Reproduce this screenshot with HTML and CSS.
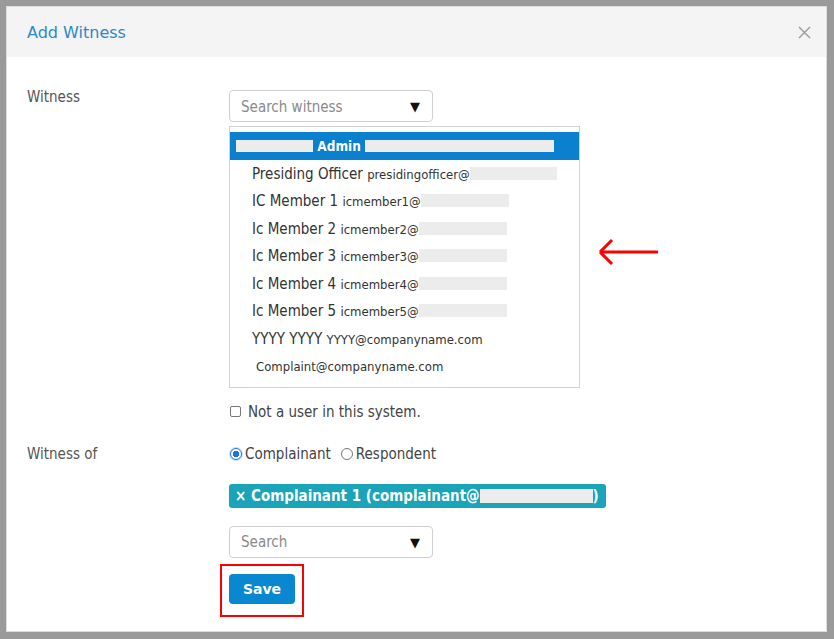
FILE: index.html
```html
<!DOCTYPE html>
<html>
<head>
<meta charset="utf-8">
<link rel="stylesheet" href="styles.css">
</head>
<body>
<div class="frame">
  <div class="dialog">
    <div class="header">
      <h4 class="title">Add Witness</h4>
      <span class="close"><svg width="13" height="13" viewBox="0 0 13 13"><path d="M1 1L12 12M12 1L1 12" stroke="#9a9a9a" stroke-width="1.4" fill="none"/></svg></span>
    </div>
    <div class="body">
      <div class="row">
        <div class="label">Witness</div>
        <div class="control">
          <div class="select"><span class="ph">Search witness</span><span class="caret">▼</span></div>
          <ul class="list">
            <li class="item active"><span class="redact r-a1"></span> <b>Admin</b> <span class="redact r-a2"></span></li>
            <li class="item"><span class="name">Presiding Officer</span> <span class="email">presidingofficer@</span><span class="redact r-p"></span></li>
            <li class="item"><span class="name">IC Member 1</span> <span class="email">icmember1@</span><span class="redact r-m"></span></li>
            <li class="item"><span class="name">Ic Member 2</span> <span class="email">icmember2@</span><span class="redact r-m"></span></li>
            <li class="item"><span class="name">Ic Member 3</span> <span class="email">icmember3@</span><span class="redact r-m"></span></li>
            <li class="item"><span class="name">Ic Member 4</span> <span class="email">icmember4@</span><span class="redact r-m"></span></li>
            <li class="item"><span class="name">Ic Member 5</span> <span class="email">icmember5@</span><span class="redact r-m"></span></li>
            <li class="item"><span class="name">YYYY YYYY</span> <span class="email">YYYY@companyname.com</span></li>
            <li class="item item-last"><span class="email">Complaint@companyname.com</span></li>
          </ul>
          <label class="check"><span class="box"></span>Not a user in this system.</label>
        </div>
      </div>
      <div class="row row2">
        <div class="label label2">Witness of</div>
        <div class="control">
          <div class="radios">
            <span class="radio checked"></span><span class="rlabel">Complainant</span>
            <span class="radio"></span><span class="rlabel">Respondent</span>
          </div>
          <div class="tag"><span class="x">×</span> Complainant 1 (complainant@<span class="redact r-t"></span>)</div>
          <div class="select select2"><span class="ph">Search</span><span class="caret">▼</span></div>
          <div class="save-wrap"><button class="save">Save</button></div>
        </div>
      </div>
    </div>
  </div>
  <svg class="arrow" width="64" height="32" viewBox="0 0 64 32"><path d="M3 16H61M3 16L15 4M3 16L15 28" stroke="#ff0000" stroke-width="3" fill="none"/></svg>
</div>
</body>
</html>
```
FILE: styles.css
```css
* { box-sizing: border-box; }
html, body { margin: 0; padding: 0; }
body {
  width: 834px;
  height: 639px;
  background: #9a9a9a;
  font-family: "DejaVu Sans Condensed", "DejaVu Sans", sans-serif;
  font-stretch: condensed;
  overflow: hidden;
}
.frame {
  position: relative;
  width: 834px;
  height: 639px;
  padding: 6px 7px 7px 6px;
}
.dialog {
  width: 100%;
  height: 626px;
  background: #fff;
  border: 1px solid #dcdcdc;
}
.header {
  height: 50px;
  background: #f4f4f4;
  display: flex;
  align-items: center;
  justify-content: space-between;
  padding: 0 15px 0 20px;
}
.title {
  margin: 0;
  font-family: "DejaVu Sans", sans-serif;
  font-stretch: normal;
  font-weight: normal;
  font-size: 16px;
  color: #2d88cc;
}
.close { display: flex; }
.body {
  padding: 33px 0 0 20px;
}
.row {
  display: grid;
  grid-template-columns: 202px 1fr;
}
.label {
  font-size: 15px;
  line-height: 14px;
  color: #555;
}
.label2 { line-height: 20px; }
.control { display: flex; flex-direction: column; align-items: flex-start; }
.select {
  width: 204px;
  height: 32px;
  border: 1px solid #cfcfcf;
  border-radius: 4px;
  display: flex;
  align-items: center;
  justify-content: space-between;
  padding: 1px 12px 0 11px;
  font-size: 15px;
}
.ph { color: #8a8a8a; }
.caret { color: #111; font-family: "DejaVu Sans", sans-serif; font-stretch: normal; font-size: 13px; }
.list {
  list-style: none;
  margin: 4px 0 0 0;
  padding: 5px 0 7px 0;
  width: 351px;
  border: 1px solid #d2d2d2;
}
.item {
  height: 27.5px;
  line-height: 28.5px;
  padding-left: 22px;
  white-space: pre;
  color: #333;
  font-size: 15px;
}
.item.active {
  background: #0a80cf;
  padding-left: 6px;
  color: #fff;
}
.item b { font-weight: bold; font-size: 13.5px; }
.email { font-size: 13px; }
.item-last { padding-left: 26px; }
.redact {
  display: inline-block;
  background: #ececec;
  height: 13px;
  vertical-align: -1px;
}
.r-a1 { width: 77px; height: 12px; }
.r-a2 { width: 189px; height: 12px; }
.r-p { width: 87px; }
.r-m { width: 88px; }
.r-t { width: 113px; height: 14px; vertical-align: -2px; }
.check {
  margin-top: 14px;
  height: 20px;
  display: flex;
  align-items: center;
  font-size: 15px;
  color: #444;
}
.box {
  width: 11px;
  height: 11px;
  border: 1px solid #767676;
  border-radius: 2px;
  margin: 0 7px 0 1px;
}
.row2 { margin-top: 22px; }
.radios {
  height: 20px;
  display: flex;
  align-items: center;
  font-size: 15px;
  color: #444;
}
.radio {
  width: 12px;
  height: 12px;
  border-radius: 50%;
  border: 1px solid #767676;
  margin: 0 3px 0 1px;
}
.radio.checked {
  border: 1px solid #1a73e8;
  background: radial-gradient(circle, #1a73e8 0 3px, #fff 3.5px);
  box-shadow: 0 0 0 1px #c9def8;
}
.rlabel { margin-right: 9px; }
.tag {
  margin-top: 20px;
  width: 377px;
  height: 24px;
  line-height: 24px;
  background: #1aa4b9;
  border-radius: 3px;
  color: #fff;
  font-weight: bold;
  font-size: 15px;
  padding-left: 6px;
  white-space: pre;
}
.select2 { margin-top: 18px; }
.save-wrap { margin-top: 16px; position: relative; }
.save-wrap::after {
  content: "";
  position: absolute;
  left: -9px;
  top: -10px;
  right: -9px;
  bottom: -13px;
  border: 2px solid #ff0000;
}
.save {
  width: 66px;
  height: 30px;
  border: none;
  border-radius: 4px;
  background: #0a87d1;
  color: #fff;
  font-family: "DejaVu Sans", sans-serif;
  font-weight: bold;
  font-size: 14px;
  padding: 0;
  display: block;
}
.arrow {
  position: absolute;
  left: 597px;
  top: 236px;
}
```
